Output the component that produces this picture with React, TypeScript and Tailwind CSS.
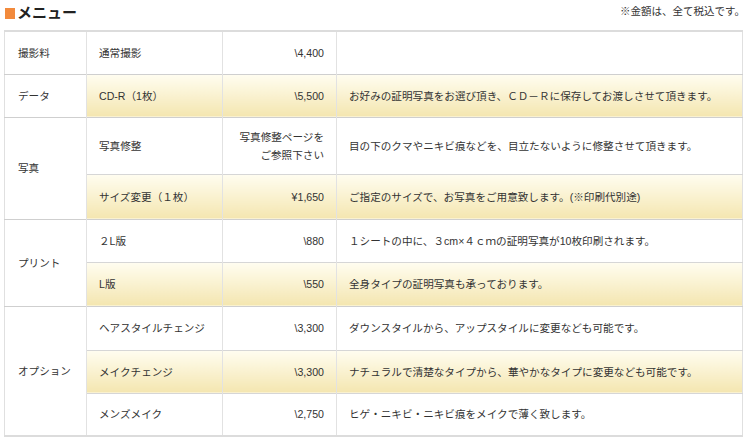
import React from "react";

type Item = { name: string; price: React.ReactNode; desc: string; hl?: boolean; h: string };
type Group = { cat: string; items: Item[] };

const groups: Group[] = [
  { cat: "撮影料", items: [{ name: "通常撮影", price: "\\4,400", desc: "", h: "h-[43px]" }] },
  {
    cat: "データ",
    items: [
      {
        name: "CD-R（1枚）",
        price: "\\5,500",
        desc: "お好みの証明写真をお選び頂き、ＣＤ－Ｒに保存してお渡しさせて頂きます。",
        hl: true,
        h: "h-[43px]",
      },
    ],
  },
  {
    cat: "写真",
    items: [
      {
        name: "写真修整",
        price: (
          <>
            写真修整ページを
            <br />
            ご参照下さい
          </>
        ),
        desc: "目の下のクマやニキビ痕などを、目立たないように修整させて頂きます。",
        h: "h-[57px]",
      },
      {
        name: "サイズ変更（１枚）",
        price: "¥1,650",
        desc: "ご指定のサイズで、お写真をご用意致します。(※印刷代別途)",
        hl: true,
        h: "h-[45px]",
      },
    ],
  },
  {
    cat: "プリント",
    items: [
      { name: "２L版", price: "\\880", desc: "１シートの中に、３cm×４ｃｍの証明写真が10枚印刷されます。", h: "h-[43px]" },
      { name: "L版", price: "\\550", desc: "全身タイプの証明写真も承っております。", hl: true, h: "h-[44px]" },
    ],
  },
  {
    cat: "オプション",
    items: [
      { name: "ヘアスタイルチェンジ", price: "\\3,300", desc: "ダウンスタイルから、アップスタイルに変更なども可能です。", h: "h-[44px]" },
      {
        name: "メイクチェンジ",
        price: "\\3,300",
        desc: "ナチュラルで清楚なタイプから、華やかなタイプに変更なども可能です。",
        hl: true,
        h: "h-[43px]",
      },
      { name: "メンズメイク", price: "\\2,750", desc: "ヒゲ・ニキビ・ニキビ痕をメイクで薄く致します。", h: "h-[43px]" },
    ],
  },
];

export default function App() {
  const font = { fontFamily: '"Liberation Sans", "Noto Sans CJK JP", sans-serif' };
  const cell = "border-l border-[#e2e2e2] px-[12px] align-middle";
  return (
    <div className="w-[750px] h-[440px] bg-white text-[#333] relative" style={font}>
      <div className="flex items-start justify-between pl-[5px] pr-[5px] pt-[3px] h-[30px]">
        <div className="flex items-center gap-[2px]">
          <span className="inline-block w-[10px] h-[11px] bg-[#f28a3c]" />
          <h2 className="text-[15px] font-bold text-[#222] leading-[20px]">メニュー</h2>
        </div>
        <p className="text-[10.5px] text-[#333] pt-[1px]">※金額は、全て税込です。</p>
      </div>
      <table className="ml-[4px] w-[739px] border-collapse text-[10.6px] leading-[18px] border-t-2 border-b-2 border-t-[#dcdcdc] border-b-[#dcdcdc] border-l border-r border-l-[#e0e0e0] border-r-[#e0e0e0] table-fixed">
        <colgroup>
          <col className="w-[82px]" />
          <col className="w-[136px]" />
          <col className="w-[114px]" />
          <col />
        </colgroup>
        <tbody>
          {groups.map((g) =>
            g.items.map((it, i) => {
              const bg = it.hl ? "bg-gradient-to-b from-[#fffdf0] to-[#f4e6b0]" : "bg-white";
              return (
                <tr key={g.cat + i} className={`${it.h} ${i === 0 ? "border-t border-[#cfcfcf]" : "border-t border-[#d6d6d6]"}`}>
                  {i === 0 && (
                    <td rowSpan={g.items.length} className="px-[13px] align-middle bg-white">
                      {g.cat}
                    </td>
                  )}
                  <td className={`${cell} ${bg}`}>{it.name}</td>
                  <td className={`${cell} ${bg} text-right`}>{it.price}</td>
                  <td className={`${cell} ${bg}`}>{it.desc}</td>
                </tr>
              );
            })
          )}
        </tbody>
      </table>
    </div>
  );
}
